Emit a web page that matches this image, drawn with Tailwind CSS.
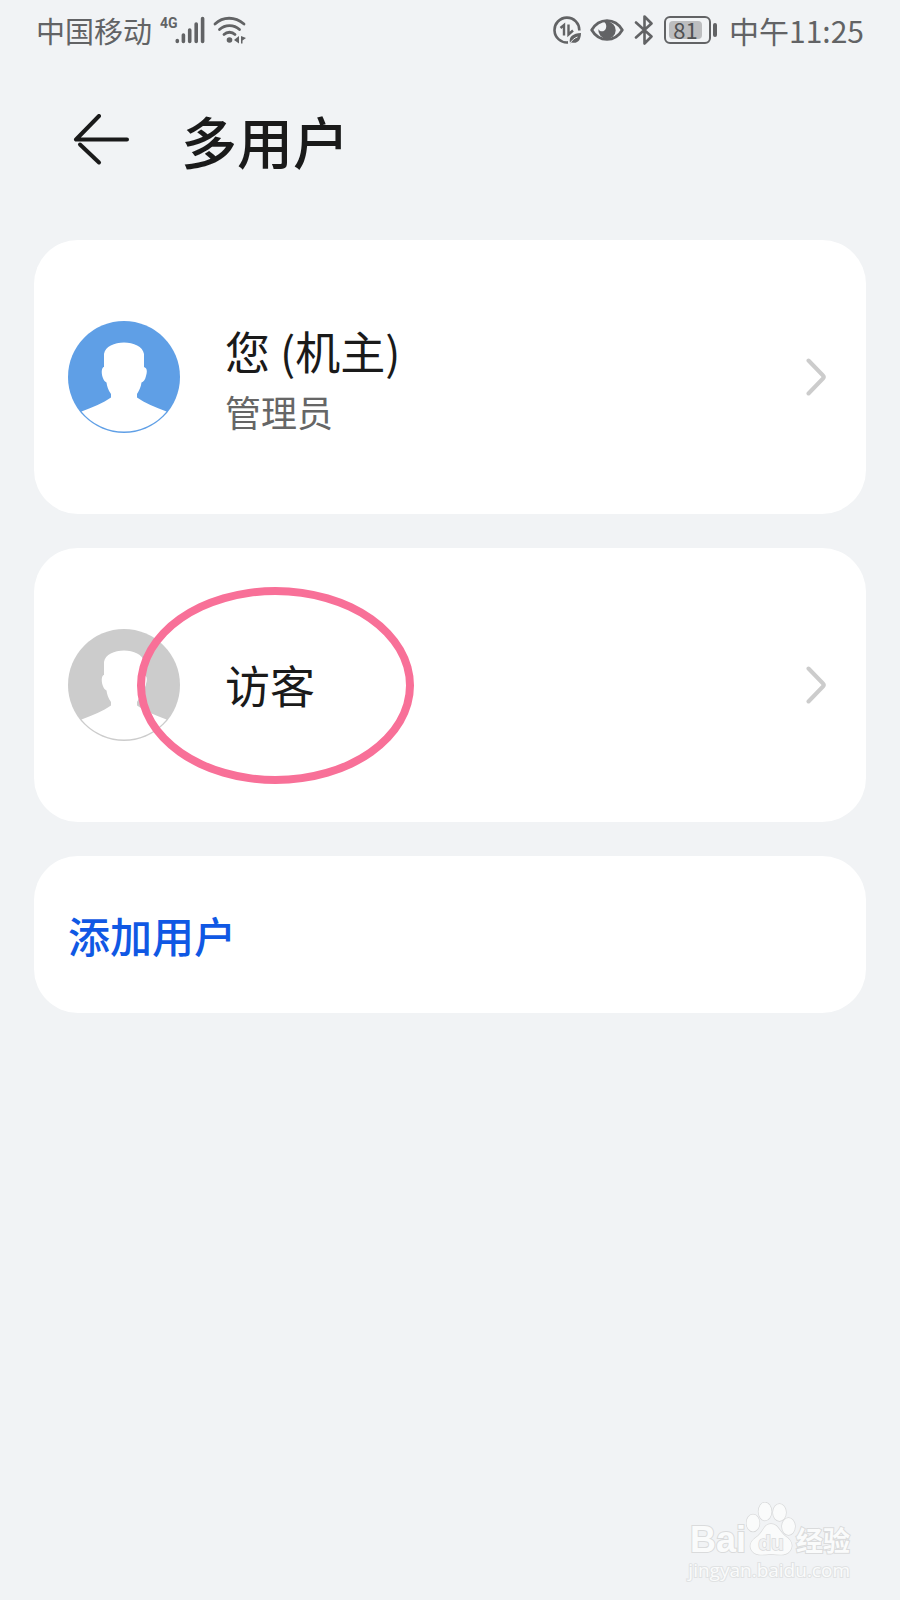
<!DOCTYPE html>
<html lang="zh-CN">

<head>
    <meta charset="UTF-8">
    <meta name="viewport" content="width=device-width, initial-scale=1.0">
    <title>多用户</title>
    <script src="https://cdn.jsdelivr.net/npm/@tailwindcss/browser@4"></script>
</head>

<body class="min-h-screen flex flex-col bg-[#f1f3f5] text-[#1a1a1a] font-['Noto_Sans_CJK_SC',sans-serif]">
    <!-- Status bar -->
    <div class="flex justify-between items-center h-15 px-9 text-[29px] leading-none text-[#626365]">
        <div class="flex items-center">
            <span>中国移动</span>
            <span class="self-start ml-2 text-sm leading-none font-bold font-[Roboto,sans-serif]">4G</span>
            <svg class="w-[30px] h-7 -ml-[3px]" viewBox="0 0 30 28" fill="none" stroke="currentColor" stroke-width="3.6" stroke-linecap="round">
                <path d="M2.300 24.5v1M8.400 19v6.5M14.700 14v11.5M21.200 8v17.5M27.600 2.500v23" />
            </svg>
            <svg class="w-[34px] h-7 ml-2" viewBox="0 0 34 28" fill="none" stroke="currentColor" stroke-width="2.800" stroke-linecap="round">
                <path d="M2 8C10 .3 22 .3 31 8M6.500 13.500C12 8.300 21 8.300 26.500 13.500M11 18.500C14 15.500 19 15.500 22 18.500" />
                <circle cx="16.500" cy="24" r="2.800" fill="currentColor" stroke="none" />
                <path d="M21 24l5-4v7.500zM28 20v7.500h1.500V24.500l3.500-2.500z" fill="currentColor" stroke="none" />
            </svg>
        </div>
        <div class="flex items-center">
            <svg class="w-7 h-7" viewBox="0 0 28 28" fill="none" stroke="currentColor" stroke-width="2.600">
                <path d="M26.300 14.500A12.400 12.400 0 1 0 15 26.400" />
                <path d="M7.500 12l3.500-3V19.500M15.500 8.500v10l4.500-4" stroke-width="2.400" />
                <path d="M17 27C15.500 20.500 20 17.500 28 17c-.2 7-3 11-9.500 9.500l-1.500 1z" fill="currentColor" stroke="none" />
                <path d="M17 27.500c2-3.500 4.500-5.500 7.500-6.500" stroke="#f1f3f5" stroke-width="1" />
            </svg>
            <svg class="w-[34px] h-7 ml-[9px]" viewBox="0 0 34 28">
                <path d="M1.700 14C9 1.500 25 1.500 32.300 14C25 26.500 9 26.500 1.700 14z" fill="none" stroke="currentColor" stroke-width="2.800" stroke-linejoin="round" />
                <path d="M17 5.500a8.700 8.700 0 1 1-8.600 7.500c1 2.500 4 3 6 1.500c2.500-2 2.500-6 0-8.500z" fill="currentColor" />
            </svg>
            <svg class="w-5 h-[30px] ml-[10px]" viewBox="0 0 20 30" fill="none" stroke="currentColor" stroke-width="2.600" stroke-linecap="round" stroke-linejoin="round">
                <path d="M2 7.500L17.500 21.500L10.500 28.500V1.500L17.500 8.500L2 22.500" />
            </svg>
            <div class="flex items-center ml-[10px]">
                <div class="w-[47px] h-7 rounded-md border-2 border-current p-[3px]">
                    <div class="flex items-center justify-center h-full w-[33px] pb-[2px] rounded-sm bg-[#bcbdbf] text-[22px] text-[#505153]">81</div>
                </div>
                <div class="w-1 h-[14px] ml-[2px] rounded-sm bg-current"></div>
            </div>
            <span class="ml-3 text-[30px]">中午11:25</span>
        </div>
    </div>

    <header class="flex items-center h-40 px-[73px]">
        <button type="button" aria-label="返回">
            <svg class="w-14 h-[52px]" viewBox="0 0 56 52" fill="none" stroke="currentColor" stroke-width="4" stroke-linecap="round" stroke-linejoin="round">
                <path d="M26 2L3 25.500H54" />
                <path d="M26 48.500L7 30.500" />
            </svg>
        </button>
        <h1 class="ml-[52px] text-[56px] leading-none font-medium">多用户</h1>
    </header>

    <main class="flex flex-col gap-[34px] mt-5 px-[34px]">
        <a href="#owner" class="flex items-center h-[274px] rounded-[44px] bg-white pl-[34px] pr-10">
            <svg class="w-28 h-28 text-[#5f9fe6]" viewBox="0 0 112 112">
                <circle cx="56" cy="56" r="56" fill="currentColor" />
                <path d="M13.500 90.500C25 86 35 82 43 76.500V73C40 69 39 65 38.500 61.500C35 60 33 53 34 48.500C34.500 46.500 35.500 46 36 46V33C38 17.500 74 17.500 76 33V46C79 47 79.500 50 78 55C77 59 75.500 61 73.500 61.500C73 66 71 70 69 73V76.500C77 82 87 86 98.500 90.500A55 55 0 0 1 13.500 90.500z" fill="#fff" />
            </svg>
            <div class="flex-1 ml-[45px] pt-2">
                <div class="text-[45px] leading-[60px]">您 (机主)</div>
                <div class="text-4xl leading-[60px] text-[#666]">管理员</div>
            </div>
            <svg class="w-5 h-[38px]" viewBox="0 0 20 38" fill="none" stroke="#ccc" stroke-width="4" stroke-linecap="round" stroke-linejoin="round">
                <path d="M2.500 2.500L17 17.500Q18.500 19 17 20.500L2.500 35.500" />
            </svg>
        </a>

        <a href="#guest" class="relative flex items-center h-[274px] rounded-[44px] bg-white pl-[34px] pr-10">
            <svg class="w-28 h-28 text-[#ccc]" viewBox="0 0 112 112">
                <circle cx="56" cy="56" r="56" fill="currentColor" />
                <path d="M13.500 90.500C25 86 35 82 43 76.500V73C40 69 39 65 38.500 61.500C35 60 33 53 34 48.500C34.500 46.500 35.500 46 36 46V33C38 17.500 74 17.500 76 33V46C79 47 79.500 50 78 55C77 59 75.500 61 73.500 61.500C73 66 71 70 69 73V76.500C77 82 87 86 98.500 90.500A55 55 0 0 1 13.500 90.500z" fill="#fff" />
            </svg>
            <div class="flex-1 ml-[45px] text-[45px] leading-[60px]">访客</div>
            <svg class="w-5 h-[38px]" viewBox="0 0 20 38" fill="none" stroke="#ccc" stroke-width="4" stroke-linecap="round" stroke-linejoin="round">
                <path d="M2.500 2.500L17 17.500Q18.500 19 17 20.500L2.500 35.500" />
            </svg>
            <!-- highlight ring -->
            <span class="absolute left-[103px] top-[39px] w-[277px] h-[197px] rounded-[50%] border-8 border-[#f87098]"></span>
        </a>

        <button type="button" class="h-[157px] rounded-[44px] bg-white px-[34px] text-left text-[42px] font-medium text-[#1058e4]">添加用户</button>
    </main>

    <!-- Watermark -->
    <footer class="flex flex-col items-end mt-auto pr-[50px] pb-4 text-[#fafbfb]">
        <div class="flex items-end font-bold leading-none [-webkit-text-stroke:2px_#dadbdc] [paint-order:stroke]">
            <span class="text-4xl leading-8 font-['Liberation_Sans',sans-serif]">Bai</span>
            <svg class="w-[50px] h-[54px]" viewBox="0 0 50 54" fill="currentColor" stroke="#d8d9da" stroke-width="1.400">
                <ellipse cx="7" cy="21" rx="6.500" ry="8.500" />
                <ellipse cx="19" cy="9.500" rx="6.500" ry="9" />
                <ellipse cx="33.500" cy="10.500" rx="6.500" ry="8.500" />
                <ellipse cx="42.500" cy="24.500" rx="6.500" ry="8.500" />
                <path d="M25 22C32 22 33 29 39 34C45 38 47 42 45 47C42 54 34 53 25 52C16 53 8 54 5 47C3 42 6 38 12 34C18 29 18 22 25 22z" />
                <text x="25" y="48" text-anchor="middle" font-size="21" fill="#f1f2f3" class="font-['Liberation_Sans',sans-serif] [-webkit-text-stroke:2px_#d4d5d6]">du</text>
            </svg>
            <span class="text-[27px] leading-8">经验</span>
        </div>
        <a href="https://jingyan.baidu.com" class="text-[19px] leading-7 font-['Open_Sans',sans-serif] [-webkit-text-stroke:2px_#e0e2e3] [paint-order:stroke]">jingyan.baidu.com</a>
    </footer>
</body>

</html>
